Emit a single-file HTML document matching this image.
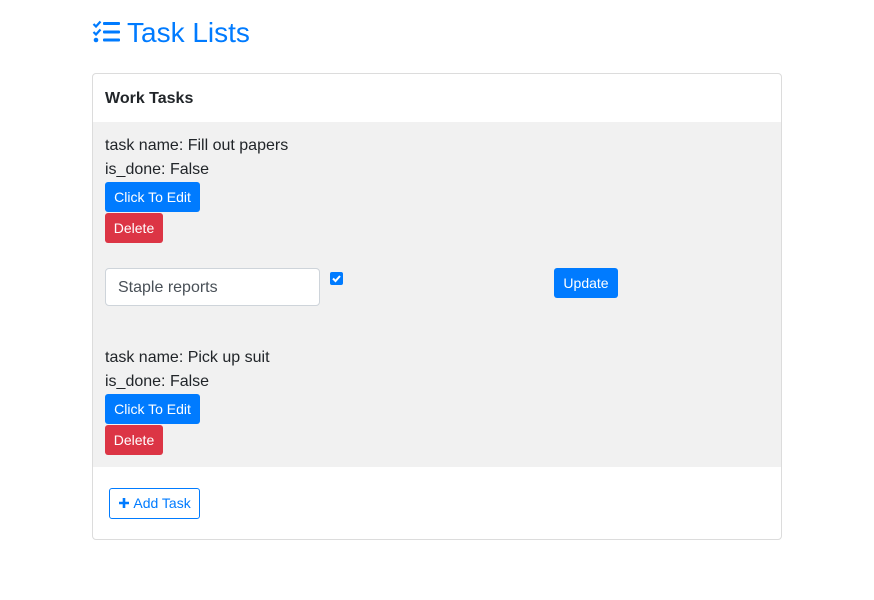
<!DOCTYPE html>
<html><head><style>
body{margin:0;width:874px;height:600px;background:#fff;font-family:"Liberation Sans",sans-serif;color:#212529;position:relative;overflow:hidden}
.a{position:absolute}
.btn{position:absolute;border-radius:3px;color:#fff;font-size:14px;line-height:30px;text-align:center}
.blue{background:#007bff}.red{background:#dc3545}
.t{position:absolute;left:105px;font-size:16px;line-height:24px}
</style></head><body>
<svg class="a" style="left:92px;top:20px" width="30" height="24" viewBox="0 0 30 24">
<path d="M1.5 4 l2.5 2.5 l4.5-5" stroke="#007bff" stroke-width="2.2" fill="none"/>
<path d="M1.5 12 l2.5 2.5 l4.5-5" stroke="#007bff" stroke-width="2.2" fill="none"/>
<circle cx="4" cy="20" r="2.3" fill="#007bff"/>
<rect x="11" y="2" width="17" height="3" rx="1" fill="#007bff"/>
<rect x="11" y="10.5" width="17" height="3" rx="1" fill="#007bff"/>
<rect x="11" y="18.5" width="17" height="3" rx="1" fill="#007bff"/>
</svg>
<div class="a" style="left:127px;top:15px;font-size:28px;line-height:36px;color:#007bff">Task Lists</div>
<div class="a" style="left:92px;top:73px;width:688px;height:465px;border:1px solid #dcdcdc;border-radius:4px"></div>
<div class="a" style="left:105px;top:88px;font-size:16px;font-weight:bold;line-height:22px">Work Tasks</div>
<div class="a" style="left:93px;top:122px;width:688px;height:345px;background:#f1f1f1"></div>
<div class="t" style="top:134px">task name: Fill out papers</div>
<div class="t" style="top:158px">is_done: False</div>
<div class="btn blue" style="left:105px;top:182px;width:95px">Click To Edit</div>
<div class="btn red" style="left:105px;top:213px;width:58px">Delete</div>
<div class="a" style="left:105px;top:268px;width:213px;height:36px;background:#fff;border:1px solid #ced4da;border-radius:4px;font-size:16px;line-height:37px;color:#495057;text-indent:12px">Staple reports</div>
<svg class="a" style="left:330px;top:272px" width="13" height="13"><rect width="13" height="13" rx="2" fill="#007bff"/><path d="M3 6.5l2.5 2.5l4.5-5" stroke="#fff" stroke-width="2" fill="none"/></svg>
<div class="btn blue" style="left:554px;top:268px;width:64px">Update</div>
<div class="t" style="top:346px">task name: Pick up suit</div>
<div class="t" style="top:370px">is_done: False</div>
<div class="btn blue" style="left:105px;top:394px;width:95px">Click To Edit</div>
<div class="btn red" style="left:105px;top:425px;width:58px">Delete</div>
<div class="btn" style="left:109px;top:488px;width:89px;height:29px;line-height:29px;border:1px solid #007bff;color:#007bff"><svg width="12" height="12" style="vertical-align:-1px"><path d="M6 1v10M1 6h10" stroke="#007bff" stroke-width="2.6"/></svg> Add Task</div>
</body></html>
